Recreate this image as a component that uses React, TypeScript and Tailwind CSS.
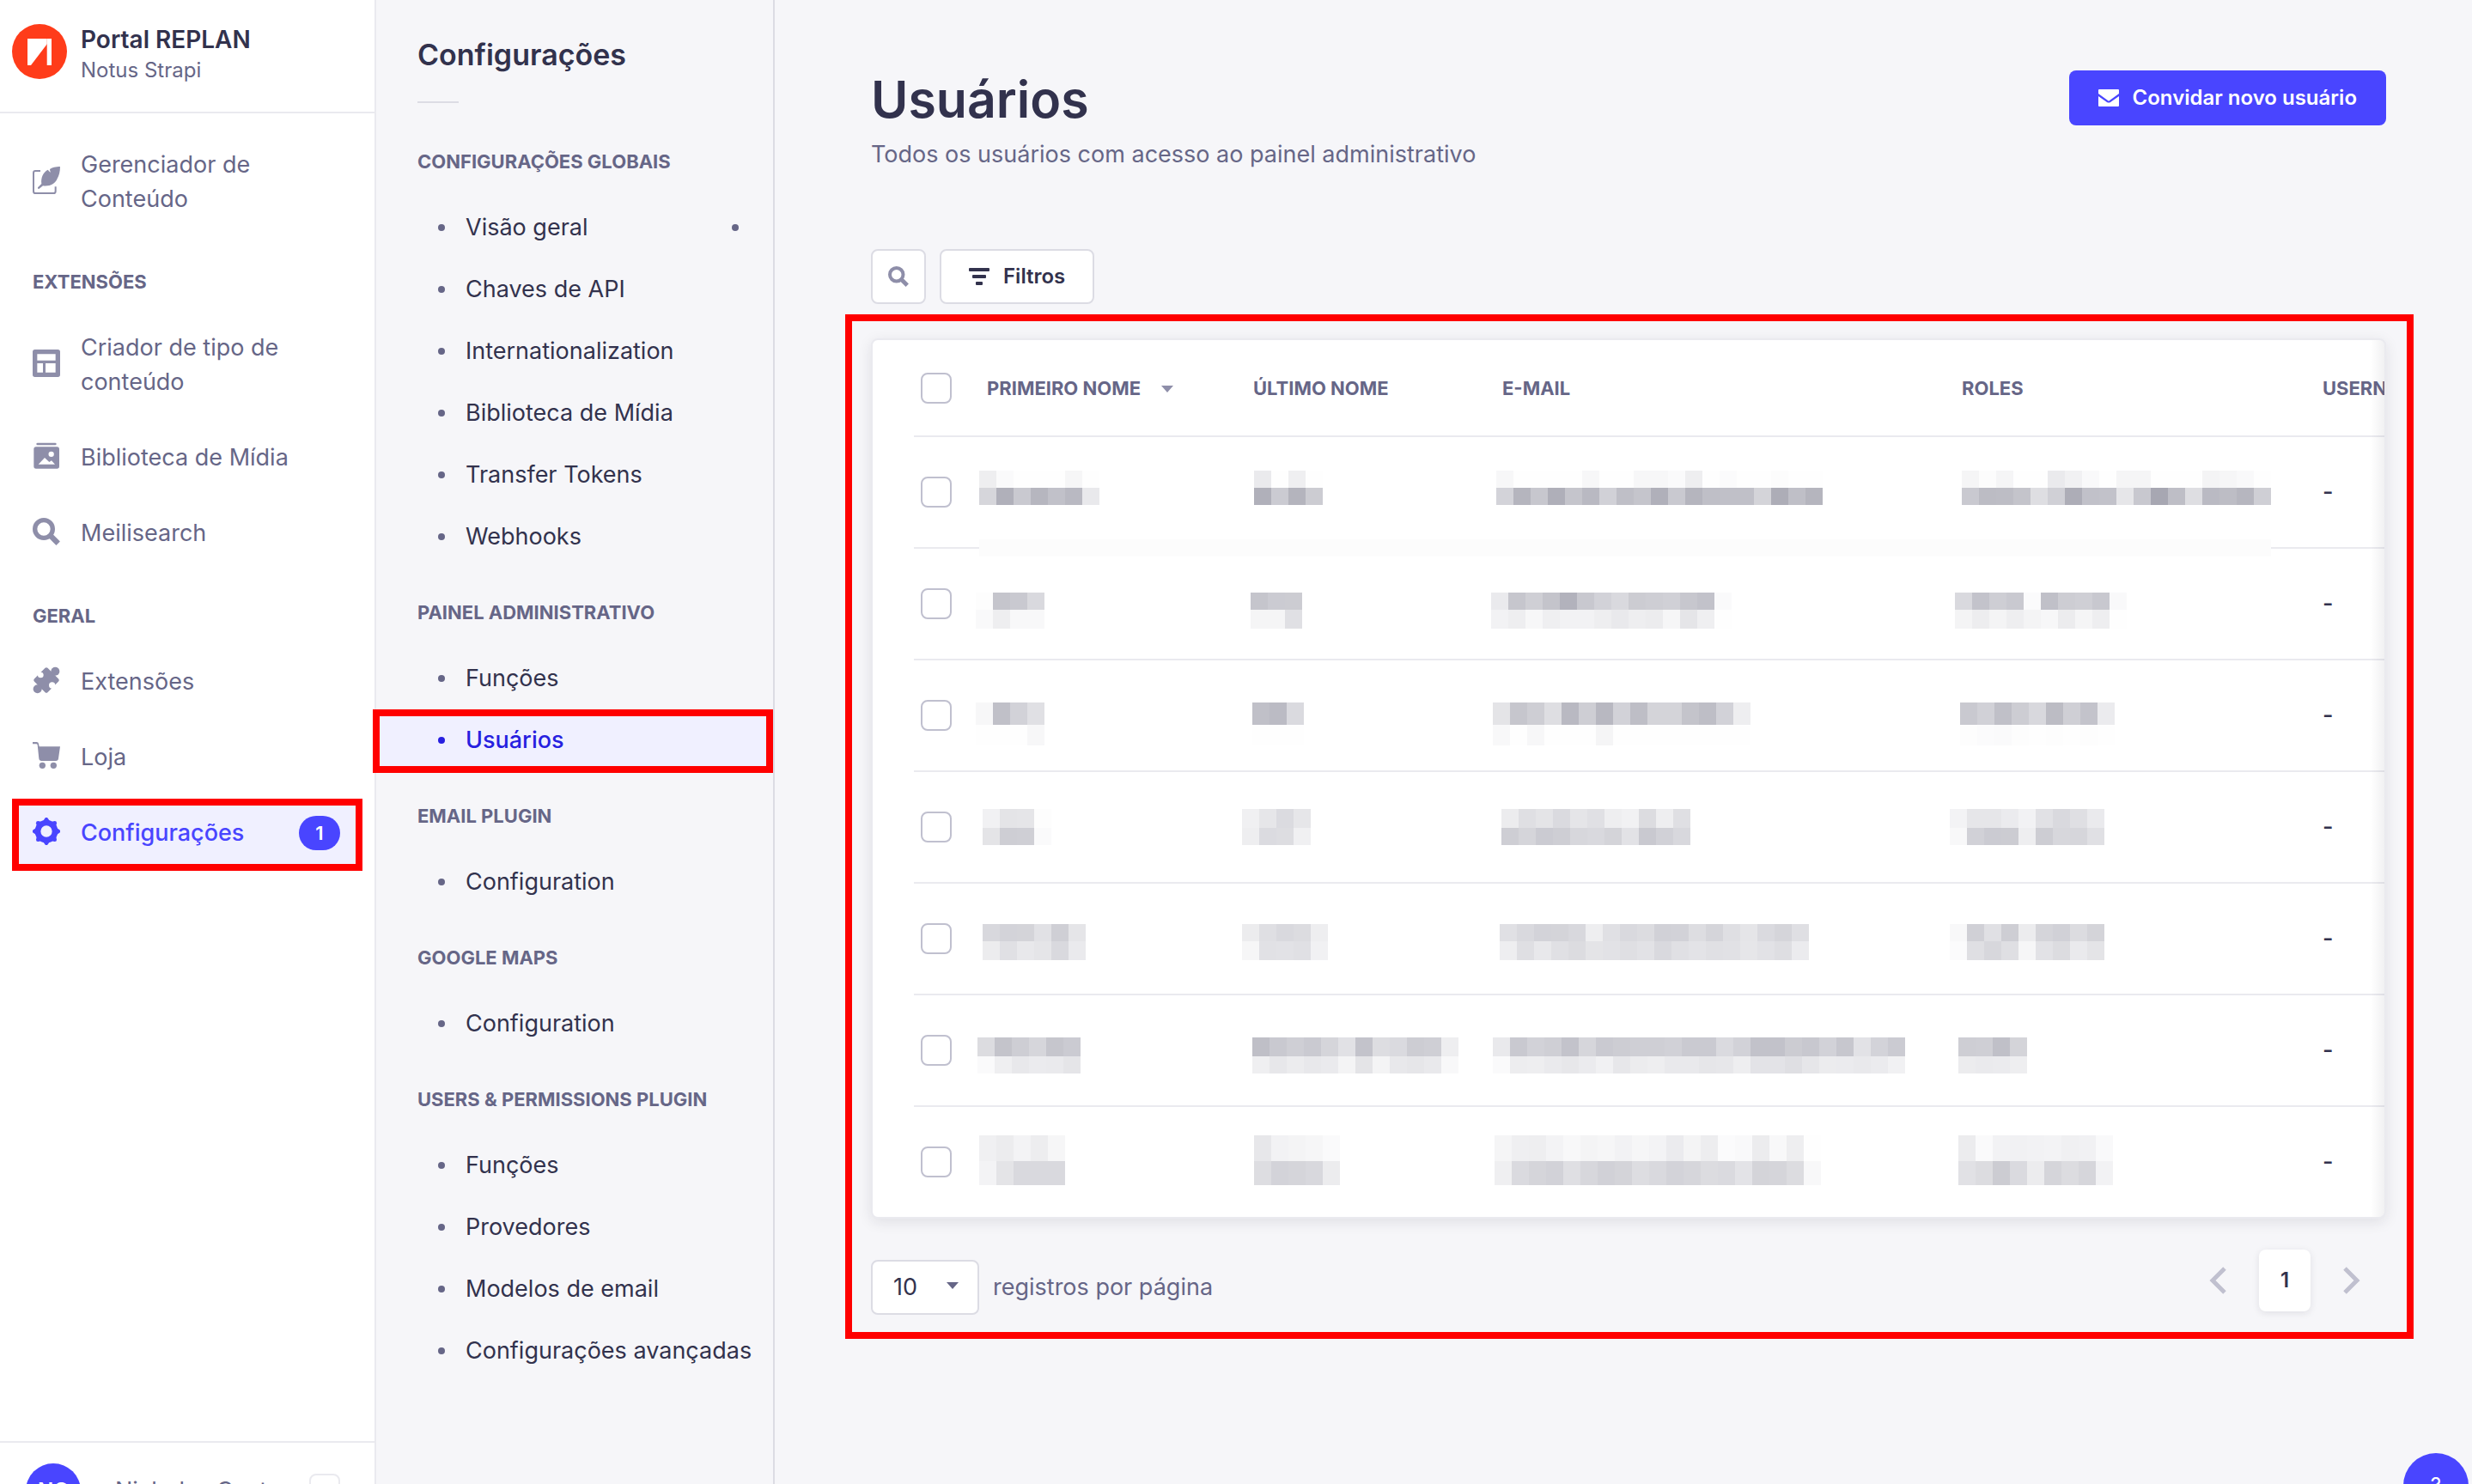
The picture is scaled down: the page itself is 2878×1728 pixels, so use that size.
import React from 'react';

/* ---------------------------------- Icons --------------------------------- */

type IconProps = { className?: string };

function FeatherIcon({ className }: IconProps) {
  return (
    <svg viewBox="0 0 96 96" className={className} fill="currentColor" aria-hidden="true">
      <path d="M27 15H10Q3 15 3 22V86Q3 93 10 93H73Q80 93 80 86V70" fill="none" stroke="currentColor" strokeWidth="6" />
      <path d="M96 0C82 0 66 4 60 9C60 13 61 16 63 20C58 17 55 13 53 11C36 20 28 40 31 60L18 73Q16 78 22 78L36 67C60 70 79 60 86 42C92 32 96 18 96 0Z" />
    </svg>
  );
}

function LayoutIcon({ className }: IconProps) {
  return (
    <svg viewBox="0 0 96 96" className={className} fill="currentColor" aria-hidden="true">
      <path
        fillRule="evenodd"
        d="M8 0H88Q96 0 96 8V88Q96 96 88 96H8Q0 96 0 88V8Q0 0 8 0ZM16 16V38H80V16ZM16 48V80H36V48ZM45 48V80H80V48Z"
      />
    </svg>
  );
}

function PicturesIcon({ className }: IconProps) {
  return (
    <svg viewBox="0 0 96 96" className={className} fill="currentColor" aria-hidden="true">
      <rect x="13" y="2" width="70" height="8" rx="4" />
      <path
        fillRule="evenodd"
        d="M12 16H85Q93 16 93 24V84Q93 92 85 92H12Q4 92 4 84V24Q4 16 12 16ZM20 77H78L66 64L58 69L42 54ZM65 32A9 9 0 1 0 65 51A9 9 0 1 0 65 32Z"
      />
    </svg>
  );
}

function SearchIcon({ className }: IconProps) {
  return (
    <svg viewBox="0 0 96 96" className={className} fill="none" stroke="currentColor" aria-hidden="true">
      <circle cx="39" cy="39" r="31" strokeWidth="16" />
      <path d="M60 60L89 89" strokeWidth="19" />
    </svg>
  );
}

function PuzzleIcon({ className }: IconProps) {
  return (
    <svg viewBox="0 0 96 96" className={className} aria-hidden="true">
      <mask id="puzzle-notches">
        <rect width="96" height="96" fill="white" />
        <circle cx="28" cy="30" r="10" fill="black" />
        <path d="M28 30L14 16" stroke="black" strokeWidth="13" />
        <circle cx="68" cy="66" r="11" fill="black" />
        <path d="M68 66L86 84" stroke="black" strokeWidth="13" />
      </mask>
      <g fill="currentColor" mask="url(#puzzle-notches)">
        <rect x="15" y="15" width="66" height="66" rx="6" transform="rotate(45 48 48)" />
        <circle cx="79" cy="17" r="15" />
        <circle cx="17" cy="79" r="15" />
      </g>
    </svg>
  );
}

function CartIcon({ className }: IconProps) {
  return (
    <svg viewBox="0 0 96 96" className={className} fill="currentColor" aria-hidden="true">
      <path d="M0 0H14Q20 0 21 6L23 16H96L90 58Q89 66 81 66H31Q23 66 22 58L17 10Q16 7 13 7H0Z" />
      <circle cx="34" cy="82" r="11" />
      <circle cx="73" cy="82" r="11" />
    </svg>
  );
}

function CogIcon({ className }: IconProps) {
  return (
    <svg viewBox="0 0 96 96" className={className} fill="currentColor" aria-hidden="true">
      <path fillRule="evenodd" d="M48 8A40 40 0 1 0 48 88A40 40 0 1 0 48 8ZM48 28A20 20 0 1 1 48 68A20 20 0 1 1 48 28Z" />
      {[0, 45, 90, 135, 180, 225, 270, 315].map((angle) => (
        <path key={angle} d="M34 16L43 2Q48 -3 53 2L62 16Z" transform={`rotate(${angle} 48 48)`} />
      ))}
    </svg>
  );
}

function EnvelopeIcon({ className }: IconProps) {
  return (
    <svg viewBox="0 0 24 20" className={className} fill="currentColor" aria-hidden="true">
      <path d="M1 0H23Q24 0 24 1V5L13 13Q12 14 11 13L0 5V1Q0 0 1 0Z" />
      <path d="M0 8L10 15Q12 16 14 15L24 8V19Q24 20 23 20H1Q0 20 0 19Z" />
    </svg>
  );
}

function FilterIcon({ className }: IconProps) {
  return (
    <svg viewBox="0 0 24 20" className={className} fill="currentColor" aria-hidden="true">
      <rect width="24" height="4" rx="1" />
      <rect x="4" y="8" width="16" height="4" rx="1" />
      <rect x="8" y="16" width="8" height="4" rx="1" />
    </svg>
  );
}

function CaretIcon({ className }: IconProps) {
  return (
    <svg viewBox="0 0 14 8" className={className} fill="currentColor" aria-hidden="true">
      <path d="M0 0H14L7 8Z" />
    </svg>
  );
}

function ChevronIcon({ className }: IconProps) {
  return (
    <svg viewBox="0 0 20 32" className={className} fill="none" stroke="currentColor" strokeWidth="5" aria-hidden="true">
      <path d="M18 2L4 16L18 30" />
    </svg>
  );
}

function Logo() {
  return (
    <svg viewBox="0 0 64 64" className="size-16 shrink-0" role="img" aria-label="Portal REPLAN">
      <circle cx="32" cy="32" r="32" fill="#ff3c1a" />
      <path d="M18 17H41V23L22 48H18Z" fill="#fff" />
      <path d="M41 17V48" stroke="#ffb3a5" strokeWidth="1" />
      <rect x="41" y="17" width="5" height="31" fill="#fff" />
    </svg>
  );
}

/* Red frame that calls attention to the element it is placed in. */
function Highlight({ className }: { className: string }) {
  return <span aria-hidden="true" className={`pointer-events-none absolute z-10 border-8 border-[#ff0000] ${className}`} />;
}

/* -------------------------------- Main menu ------------------------------- */

function MenuLink({
  icon: Icon,
  active,
  badge,
  children,
}: {
  icon: (p: IconProps) => React.ReactElement;
  active?: boolean;
  badge?: string;
  children: React.ReactNode;
}) {
  return (
    <li>
      <a
        href="#"
        className={`relative flex items-center gap-6 rounded-lg pr-6 pl-[22px] py-4 text-[27px] leading-10 ${
          active ? 'bg-[#f0f0ff] font-medium text-[#4945ff]' : 'text-[#666687]'
        }`}
      >
        <Icon className={`mb-1 size-8 shrink-0 ${active ? 'text-[#4945ff]' : 'text-[#8e8ea9]'}`} />
        <span className="min-w-0 flex-1">{children}</span>
        {badge && (
          <span className="flex h-10 w-12 items-center justify-center rounded-full bg-[#4945ff] text-[22px] font-semibold text-white">
            {badge}
          </span>
        )}
        {active && <Highlight className="-inset-x-0.5 -top-1 -bottom-2" />}
      </a>
    </li>
  );
}

function MenuSection({ title, children }: { title: string; children: React.ReactNode }) {
  return (
    <section className="mt-11">
      <h2 className="mb-6 px-[22px] text-[22px] leading-[33px] font-bold text-[#666687]">{title}</h2>
      <ul className="flex flex-col gap-4">{children}</ul>
    </section>
  );
}

function MainMenu() {
  return (
    <aside className="flex h-[calc(100vh+64px)] w-[438px] shrink-0 flex-col border-r-2 border-[#eaeaef] bg-white">
      <header className="flex h-[132px] shrink-0 items-start gap-4 border-b-2 border-[#eaeaef] px-3.5 pt-7">
        <Logo />
        <div>
          <p className="text-[28px] leading-9 font-semibold text-[#32324d]">Portal REPLAN</p>
          <p className="text-2xl leading-9 text-[#666687]">Notus Strapi</p>
        </div>
      </header>
      <nav aria-label="Principal" className="flex-1 px-4 pt-6">
        <ul>
          <MenuLink icon={FeatherIcon}>
            Gerenciador de
            <br />
            Conteúdo
          </MenuLink>
        </ul>
        <MenuSection title="EXTENSÕES">
          <MenuLink icon={LayoutIcon}>
            Criador de tipo de
            <br />
            conteúdo
          </MenuLink>
          <MenuLink icon={PicturesIcon}>Biblioteca de Mídia</MenuLink>
          <MenuLink icon={SearchIcon}>Meilisearch</MenuLink>
        </MenuSection>
        <MenuSection title="GERAL">
          <MenuLink icon={PuzzleIcon}>Extensões</MenuLink>
          <MenuLink icon={CartIcon}>Loja</MenuLink>
          <MenuLink icon={CogIcon} active badge="1">
            Configurações
          </MenuLink>
        </MenuSection>
      </nav>
      <footer className="flex shrink-0 items-start border-t-2 border-[#eaeaef] py-6 pr-10 pl-[30px]">
        <span className="flex size-16 shrink-0 items-center justify-center rounded-full bg-[#4945ff] text-2xl font-semibold text-white">
          NC
        </span>
        <span className="ml-10 flex-1 text-[27px] leading-[64px] whitespace-nowrap text-[#666687]">Nicholas Costa</span>
        <button type="button" aria-label="Recolher menu" className="mt-3 h-12 w-9 shrink-0 rounded-lg border-2 border-[#eaeaef] bg-white" />
      </footer>
    </aside>
  );
}

/* ------------------------------ Settings menu ----------------------------- */

const SETTINGS: { title: string; links: { label: string; active?: boolean; notice?: boolean }[] }[] = [
  {
    title: 'CONFIGURAÇÕES GLOBAIS',
    links: [
      { label: 'Visão geral', notice: true },
      { label: 'Chaves de API' },
      { label: 'Internationalization' },
      { label: 'Biblioteca de Mídia' },
      { label: 'Transfer Tokens' },
      { label: 'Webhooks' },
    ],
  },
  { title: 'PAINEL ADMINISTRATIVO', links: [{ label: 'Funções' }, { label: 'Usuários', active: true }] },
  { title: 'EMAIL PLUGIN', links: [{ label: 'Configuration' }] },
  { title: 'GOOGLE MAPS', links: [{ label: 'Configuration' }] },
  {
    title: 'USERS & PERMISSIONS PLUGIN',
    links: [{ label: 'Funções' }, { label: 'Provedores' }, { label: 'Modelos de email' }, { label: 'Configurações avançadas' }],
  },
];

function SettingsMenu() {
  return (
    <nav aria-label="Configurações" className="min-h-screen w-[464px] shrink-0 border-r-2 border-[#dcdce4] bg-[#f6f6f9] pt-11">
      <h2 className="px-12 text-[34px] leading-10 font-semibold text-[#32324d]">Configurações</h2>
      <div className="mt-[34px] ml-12 h-0.5 w-12 bg-[#dcdce4]" />
      <div className="mt-[51px] flex flex-col gap-[35px]">
        {SETTINGS.map((group) => (
          <section key={group.title}>
            <h3 className="mb-6 px-12 text-[22px] leading-[34px] font-bold whitespace-nowrap text-[#666687]">{group.title}</h3>
            <ul>
              {group.links.map((link) => (
                <li key={link.label}>
                  <a
                    href="#"
                    className={`relative flex h-[72px] items-center pr-10 pl-[72px] text-[27px] leading-10 whitespace-nowrap ${
                      link.active ? 'bg-[#f0f0ff] font-medium text-[#271fe0]' : 'text-[#32324d]'
                    }`}
                  >
                    <span className={`size-2 shrink-0 rounded-full ${link.active ? 'bg-[#271fe0]' : 'bg-[#666687]'}`} />
                    <span className="ml-6 flex-1">{link.label}</span>
                    {link.notice && <span className="size-2 shrink-0 rounded-full bg-[#666687]" />}
                    {link.active && <Highlight className="top-0 right-0 -bottom-0.5 -left-1" />}
                  </a>
                </li>
              ))}
            </ul>
          </section>
        ))}
      </div>
    </nav>
  );
}

/* ------------------------------- Users table ------------------------------ */

/* Pixelated stand-in for a hidden value: x is the offset in the cell, each
   band has a top, a height and one grey level (hex) per 20px block. */
type Band = [top: number, height: number, levels: string];
type Hidden = { x: number; bands: [Band, Band] };

function Mosaic({ value, veil }: { value: Hidden; veil?: boolean }) {
  return (
    <svg className="block h-32 w-full overflow-visible" shapeRendering="crispEdges" role="img" aria-label="Dado oculto">
      {value.bands.map(([top, height, levels]) =>
        levels.split(' ').map((level, i) => {
          const n = parseInt(level, 16);
          return (
            <rect
              key={`${top}-${i}`}
              x={value.x + i * 20}
              y={top}
              width="20"
              height={height}
              fill={`rgb(${n} ${n} ${n + Math.round((255 - n) / 8)})`}
            />
          );
        }),
      )}
      {veil && <rect x="0" y="119" width="1504" height="20" fill="#fcfcfc" />}
    </svg>
  );
}

const row = (y1: number, h1: number, y2: number, h2: number, cells: [number, string, string][]): Hidden[] =>
  cells.map(([x, a, b]) => ({ x, bands: [[y1, h1, a], [y2, h2, b]] }));

const USERS: Hidden[][] = [
  row(39, 20, 59, 20, [
    [0, 'ee fa fe fe fe f6 fe', 'd6 b0 c9 b6 c1 b9 e9'],
    [10, 'ea fe ef fe', 'b0 cb b4 cc'],
    [2, 'f7 fe fe fe fe f7 fe fe f7 f7 fa ee fe fb fe fe fc fe fe', 'd3 b5 c7 af c5 b9 d1 bf c5 b0 c9 b5 bf c0 c0 d4 ad bf b5'],
    [9, 'f5 fc f5 fe fe ea f1 f9 fe f5 f5 fe fe fe f4 f6 f9 fe', 'c9 bc bd c4 de d0 ad c1 c2 e6 c8 a7 be de ba bd b6 cf'],
  ]),
  row(51, 20, 71, 22, [
    [-4, 'fd c5 c9 d9', 'f9 ee f8 f8'],
    [6, 'c5 cb cc', 'f5 f5 e0'],
    [-4, 'ea c6 cf c4 b2 c8 d2 d9 cc ce d0 c7 c2 fa', 'f2 ee f7 ef f2 f2 ee e9 ee ec f6 e5 ef fe'],
    [1, 'd9 c3 ce c9 fb c0 cd cf c8 f9', 'f4 ed f4 ee f4 f7 ec f5 ee fe'],
  ]),
  row(49, 26, 75, 24, [
    [-4, 'f7 c0 d2 e0', 'fe fe fe f7'],
    [8, 'c0 bb da', 'fe fe fe'],
    [-2, 'e4 c6 ce de b9 ce b8 d2 be d4 d4 c4 be d2 ee', 'f8 fe f7 fe fe fe f5 fe fe fe fe fe fe fe fe'],
    [7, 'c9 d1 c0 cd d8 bc cf c3 eb', 'fd fb fa fd fe fd fe fd fe'],
  ]),
  row(43, 22, 65, 20, [
    [4, 'f1 e4 e5 fd', 'e4 ce cf fa'],
    [-4, 'f0 e6 db e6', 'ee db dd f0'],
    [8, 'ec df e4 da e5 e0 ee f1 dc ee df', 'ce d5 cb ce d7 d9 d4 e2 c9 d1 d8'],
    [-5, 'f3 e6 e6 eb f2 e1 d9 df ea', 'f8 d1 cb cc ee cd d7 d6 e0'],
  ]),
  row(47, 20, 67, 22, [
    [4, 'd8 d3 d4 e1 cf e5', 'ec e0 e8 e5 d9 ea'],
    [-4, 'ec df d9 dc ee', 'f6 e1 e2 e0 f1'],
    [6, 'e0 d9 d3 d4 d8 ee e0 d9 dc d1 d2 dd d5 df e5 da d5 df', 'ee df e8 e0 dc e4 e2 df e2 d9 e0 e3 e0 e1 e6 e2 de eb'],
    [-5, 'f8 d0 e0 ce ec d5 d1 dc d4', 'fb df d7 df f6 e2 dc ea e4'],
  ]),
  row(49, 22, 71, 20, [
    [-2, 'dc c4 ce d6 c6 cb', 'fa ef e8 eb ea e5'],
    [8, 'bf c9 cf ca d5 e1 c3 dd da cd cf ee', 'ef e7 ec e8 ea f4 e4 f4 e8 e6 e9 f8'],
    [-2, 'e9 c9 d2 cf c3 d6 ca cd cf cf d1 ca ca da d2 c2 c2 cc c8 d2 c7 e2 d3 cb', 'fa ed ee ea e7 eb f1 e7 ec ee e9 e9 e6 e7 ee e3 e3 df e6 ec eb e9 eb f1'],
    [5, 'ce cf c0 d4', 'ec ea eb ee'],
  ]),
  row(33, 30, 63, 28, [
    [0, 'f0 ec f3 ed f6', 'f3 e4 d9 d9 d9'],
    [10, 'e7 f2 f4 f6 fa', 'dd d3 d5 d8 ec'],
    [0, 'f5 ef ee f3 f8 f4 f6 f2 f6 f3 eb f4 ed fb f9 ec f8 ee fe', 'ef da d5 d2 df d7 d1 d4 dd d9 d3 d6 dc da e3 d4 d5 dc f8'],
    [5, 'ec fa f2 f1 f2 f3 f0 f1 f9', 'e1 dc cc da ec d5 dc d6 f2'],
  ]),
];

function Checkbox({ label }: { label: string }) {
  return (
    <input
      type="checkbox"
      aria-label={label}
      className="block size-9 appearance-none rounded-lg border-2 border-[#c0c0cf] bg-white checked:bg-[#4945ff]"
    />
  );
}

const HEAD_CELL = 'h-[113px] border-b-2 border-[#eaeaef] p-0 pt-0.5 pl-[9px] text-left text-[22px] font-bold text-[#666687]';

function UsersTable() {
  return (
    <div className="relative overflow-hidden rounded-lg border-2 border-[#eaeaef] bg-white pl-12 shadow-[0_4px_16px_rgba(33,33,52,0.1)]">
      <table className="w-[1860px] table-fixed border-separate border-spacing-0 whitespace-nowrap">
        <colgroup>
          <col className="w-[76px]" />
          <col className="w-[310px]" />
          <col className="w-[290px]" />
          <col className="w-[535px]" />
          <col className="w-[420px]" />
          <col />
        </colgroup>
        <thead>
          <tr>
            <td className="border-b-2 border-[#eaeaef] p-0 pl-2">
              <Checkbox label="Selecionar todos os usuários" />
            </td>
            <th scope="col" aria-sort="ascending" className={HEAD_CELL}>
              <button type="button" className="flex items-center gap-6">
                PRIMEIRO NOME
                <CaretIcon className="h-2 w-3.5 text-[#8e8ea9]" />
              </button>
            </th>
            <th scope="col" className={HEAD_CELL}>ÚLTIMO NOME</th>
            <th scope="col" className={HEAD_CELL}>E-MAIL</th>
            <th scope="col" className={HEAD_CELL}>ROLES</th>
            <th scope="col" className={HEAD_CELL}>USERNAME</th>
          </tr>
        </thead>
        <tbody>
          {USERS.map((cells, r) => {
            const edge = r < USERS.length - 1 ? 'border-b-2 border-[#eaeaef]' : '';
            return (
              <tr key={r}>
                <td className={`p-0 pl-2 ${edge}`}>
                  <Checkbox label={`Selecionar usuário ${r + 1}`} />
                </td>
                {cells.map((value, c) => (
                  <td key={c} className={`p-0 ${edge}`}>
                    <Mosaic value={value} veil={r === 0 && c === 0} />
                  </td>
                ))}
                <td className={`p-0 pl-[9px] text-[27px] font-medium text-[#32324d] ${edge}`}>-</td>
              </tr>
            );
          })}
        </tbody>
      </table>
      <div className="pointer-events-none absolute inset-y-0 right-0 w-4 bg-linear-to-r from-transparent to-[#21213410]" />
    </div>
  );
}

function TableFooter() {
  return (
    <div className="flex items-start justify-between pt-9 pr-[30px]">
      <div className="mt-3 flex items-center gap-4">
        <div className="relative">
          <select
            id="page-size"
            defaultValue="10"
            className="h-16 w-[126px] appearance-none rounded-lg border-2 border-[#dcdce4] bg-white pl-6 text-[27px] text-[#32324d]"
          >
            <option>10</option>
            <option>20</option>
            <option>50</option>
            <option>100</option>
          </select>
          <CaretIcon className="pointer-events-none absolute top-[26px] right-6 h-2 w-3.5 text-[#666687]" />
        </div>
        <label htmlFor="page-size" className="text-[27px] leading-10 text-[#666687]">
          registros por página
        </label>
      </div>
      <nav aria-label="Paginação" className="flex items-center gap-[38px]">
        <button type="button" aria-label="Página anterior" className="text-[#c0c0cf]">
          <ChevronIcon className="h-8 w-5" />
        </button>
        <a
          href="#"
          aria-current="page"
          className="flex h-[72px] w-15 items-center justify-center rounded-lg bg-white text-2xl font-semibold text-[#32324d] shadow-[0_2px_8px_rgba(33,33,52,0.1)]"
        >
          1
        </a>
        <button type="button" aria-label="Próxima página" className="text-[#c0c0cf]">
          <ChevronIcon className="h-8 w-5 rotate-180" />
        </button>
      </nav>
    </div>
  );
}

/* ---------------------------------- Page ---------------------------------- */

export default function App() {
  return (
    <div className="flex h-screen items-start overflow-hidden bg-[#f6f6f9] font-['Inter',sans-serif]">
      <MainMenu />
      <SettingsMenu />
      <main className="min-w-0 flex-1 pt-[74px] pr-[100px] pl-28">
        <div className="flex h-20 items-center justify-between">
          <h1 className="pt-1 text-[59px] leading-20 font-semibold text-[#32324d]">Usuários</h1>
          <button
            type="button"
            className="flex h-16 items-center gap-4 rounded-lg bg-[#4945ff] px-[34px] text-2xl font-semibold text-white"
          >
            <EnvelopeIcon className="h-5 w-6" />
            Convidar novo usuário
          </button>
        </div>
        <p className="mt-1.5 text-[27px] leading-10 text-[#666687]">Todos os usuários com acesso ao painel administrativo</p>
        <div className="mt-[90px] flex gap-4">
          <button
            type="button"
            aria-label="Buscar"
            className="flex size-16 items-center justify-center rounded-lg border-2 border-[#dcdce4] bg-white text-[#8e8ea9]"
          >
            <SearchIcon className="size-6" />
          </button>
          <button
            type="button"
            className="flex h-16 items-center gap-4 rounded-lg border-2 border-[#dcdce4] bg-white px-8 text-2xl font-semibold text-[#32324d]"
          >
            <FilterIcon className="h-5 w-6" />
            Filtros
          </button>
        </div>
        <section aria-label="Lista de usuários" className="relative mt-10">
          <UsersTable />
          <TableFooter />
          <Highlight className="-top-7 -right-8 -bottom-7 -left-[30px]" />
        </section>
      </main>
      <button
        type="button"
        aria-label="Ajuda"
        className="fixed right-1 -bottom-10 flex size-[76px] items-center justify-center rounded-full bg-[#4945ff] text-2xl text-white"
      >
        ?
      </button>
    </div>
  );
}
